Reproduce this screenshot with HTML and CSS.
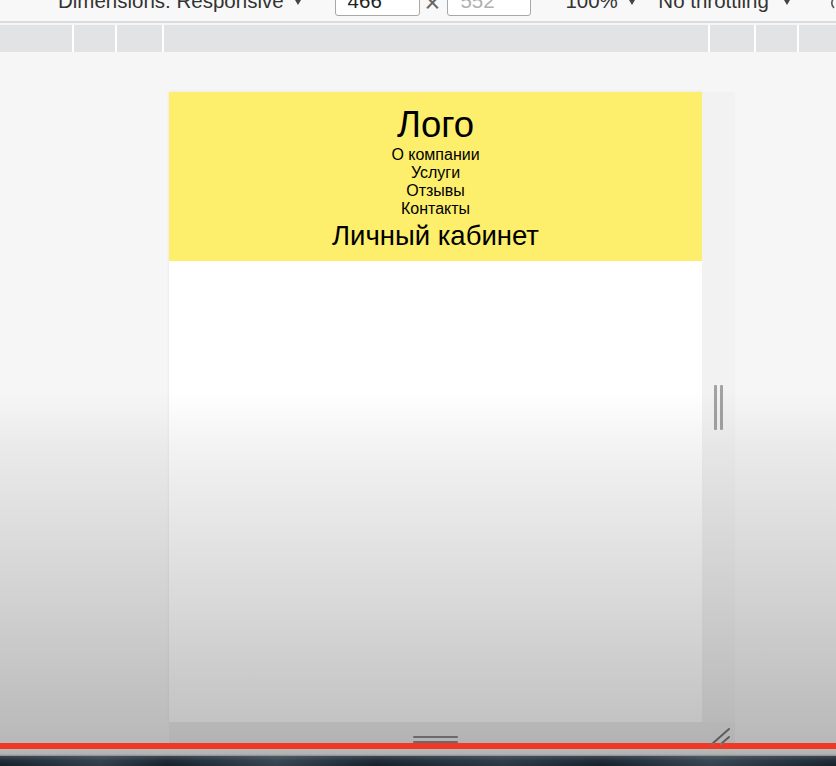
FILE: index.html
```html
<!DOCTYPE html>
<html lang="ru">
<head>
<meta charset="utf-8">
<title>Device mode</title>
<link rel="stylesheet" href="styles.css">
</head>
<body>
<div class="toolbar">
  <div class="tb-row">
    <span class="tb-text dims">Dimensions: Responsive</span><span class="caret c1"></span>
    <span class="tb-input in1">466</span>
    <span class="times">×</span>
    <span class="tb-input in2">552</span>
    <span class="tb-text zoom">100%</span><span class="caret c2"></span>
    <span class="tb-text throttle">No throttling</span><span class="caret c3"></span>
    <svg class="rotate" width="12" height="14" viewBox="0 0 12 14"><path d="M9 1 A7 7 0 0 0 4 13" fill="none" stroke="#555" stroke-width="1.6"/></svg>
  </div>
</div>
<div class="ruler">
  <span class="seg"></span><span class="seg"></span><span class="seg"></span><span class="seg"></span><span class="seg"></span><span class="seg"></span><span class="seg"></span>
</div>
<div class="stage">
  <div class="device">
    <div class="viewport">
      <header class="site-header">
        <div class="logo">Лого</div>
        <nav class="menu">
          <a href="#">О компании</a>
          <a href="#">Услуги</a>
          <a href="#">Отзывы</a>
          <a href="#">Контакты</a>
        </nav>
        <div class="cabinet">Личный кабинет</div>
      </header>
    </div>
    <div class="side-handle"><span class="vbar"></span><span class="vbar"></span></div>
    <div class="bottom-handle"><span class="hbar"></span><span class="hbar"></span></div>
    <div class="corner">
      <svg width="33" height="21" viewBox="0 0 33 21" overflow="visible"><path d="M27 7 L10 22 M27 15 L19 22" stroke="#7a7a7a" stroke-width="2" fill="none" stroke-linecap="round"/></svg>
    </div>
  </div>
</div>
<div class="shade"></div>
<div class="progress"></div>
<div class="under"></div>
<div class="scene"></div>
</body>
</html>
```
FILE: styles.css
```css
* { box-sizing: border-box; }
html, body { margin: 0; padding: 0; }
body {
  width: 836px;
  height: 766px;
  overflow: hidden;
  position: relative;
  background: #f6f6f6;
  font-family: "Liberation Sans", Arial, sans-serif;
}

/* toolbar */
.toolbar {
  height: 23px;
  background: #f8f8f8;
  border-bottom: 2px solid #dcdcdc;
  overflow: hidden;
}
.tb-row {
  display: flex;
  align-items: flex-start;
  height: 31px;
  margin-top: -10px;
  color: #333;
  font-size: 20.5px;
  line-height: 20px;
}
.tb-row > * { flex-shrink: 0; }
.tb-text { display: block; margin-top: 0.5px; white-space: nowrap; }
.dims { margin-left: 58px; }
.zoom { margin-left: 34px; }
.throttle { margin-left: 23px; }
.caret {
  display: block;
  width: 0;
  height: 0;
  margin-top: 10px;
  border-left: 3.5px solid transparent;
  border-right: 3.5px solid transparent;
  border-top: 5px solid #444;
}
.c1 { margin-left: 11px; }
.c2 { margin-left: 11.5px; }
.c3 { margin-left: 15px; }
.tb-input {
  display: block;
  height: 26px;
  border: 1px solid #a8a8a8;
  border-radius: 3px;
  background: #fff;
  padding: 0 0 0 12px;
  color: #222;
  line-height: 20px;
}
.in1 { width: 85px; margin-left: 34px; }
.in2 { width: 84px; margin-left: 7px; color: #b0b0b0; }
.times {
  display: block;
  margin-left: 5px;
  margin-top: 3px;
  font-size: 27px;
  line-height: 20px;
  color: #666;
}
.rotate { display: block; margin-left: 40px; margin-top: 5px; }

/* ruler */
.ruler {
  margin-top: 2px;
  height: 27px;
  display: grid;
  grid-template-columns: 72px 41px 45px 544px 44px 41px 1fr;
  column-gap: 2px;
  background: #ffffff;
}
.seg { background: #e2e3e5; }

/* stage */
.stage {
  height: 691px;
  padding-top: 40px;
  padding-left: 169px;
}
.device {
  display: grid;
  grid-template-columns: 533px 33px;
  grid-template-rows: 630px 21px;
}
.viewport {
  background: #ffffff;
  box-shadow: 0 0 3px rgba(0, 0, 0, 0.08);
}
.site-header {
  background: #fdef6b;
  height: 169px;
  padding-top: 12px;
  text-align: center;
  color: #000;
}
.logo {
  font-size: 36.5px;
  line-height: 42px;
}
.menu {
  display: flex;
  flex-direction: column;
  align-items: center;
}
.menu a {
  color: #000;
  text-decoration: none;
  font-size: 16px;
  line-height: 18px;
}
.cabinet {
  margin-top: 2px;
  font-size: 27.5px;
  line-height: 31px;
}
.side-handle {
  background: #f2f2f2;
  display: flex;
  justify-content: center;
  align-items: center;
  gap: 3px;
}
.vbar {
  width: 3px;
  height: 45px;
  background: #a2a2a2;
  border-radius: 1px;
}
.bottom-handle {
  background: #efefef;
  display: flex;
  flex-direction: column;
  align-items: center;
  padding-top: 14px;
  gap: 3px;
}
.hbar {
  width: 45px;
  height: 2px;
  background: #8c8c8c;
  border-radius: 1px;
}
.corner { background: #efefef; }
.corner svg { display: block; }

/* video overlays */
.shade {
  position: absolute;
  left: 0;
  top: 0;
  width: 836px;
  height: 743px;
  pointer-events: none;
  background: linear-gradient(to bottom,
    rgba(0, 0, 0, 0) 0px,
    rgba(0, 0, 0, 0) 390px,
    rgba(0, 0, 0, 0.05) 450px,
    rgba(0, 0, 0, 0.15) 600px,
    rgba(0, 0, 0, 0.25) 743px);
}
.progress {
  height: 6px;
  background: #ef3826;
}
.under {
  height: 7px;
  background: linear-gradient(to bottom, #b8b8b8 0, #b3b3b3 5px, #8a8d90 7px);
}
.scene {
  height: 10px;
  background:
    linear-gradient(to right, rgba(255,255,255,0) 0, rgba(120,140,155,0.25) 12%, rgba(255,255,255,0) 20%, rgba(120,140,155,0.3) 33%, rgba(255,255,255,0) 45%, rgba(120,140,155,0.2) 60%, rgba(255,255,255,0) 72%, rgba(120,140,155,0.3) 85%, rgba(255,255,255,0) 100%),
    linear-gradient(to bottom, #3a4652 0, #1f2a34 5px, #17212a 10px);
}
```
